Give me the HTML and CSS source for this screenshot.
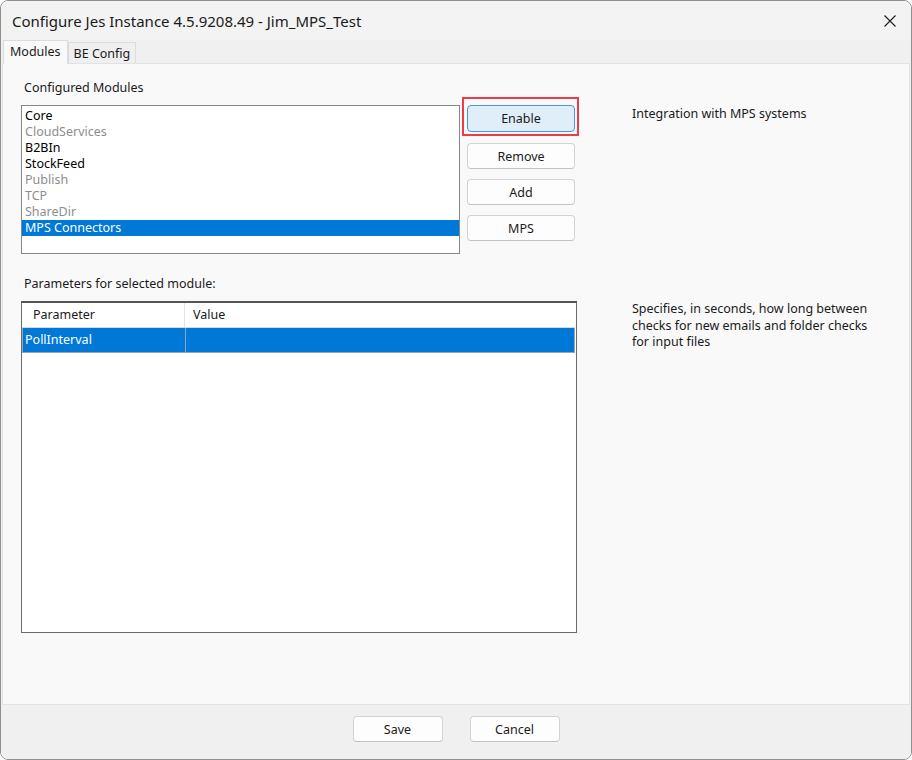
FILE: index.html
```html
<!DOCTYPE html>
<html>
<head>
<meta charset="utf-8">
<title>Configure Jes Instance</title>
<link rel="stylesheet" href="styles.css">
</head>
<body>
<div class="window">
  <div class="titlebar">
    <span class="title">Configure Jes Instance 4.5.9208.49 - Jim_MPS_Test</span>
    <svg class="close" width="12" height="12" viewBox="0 0 12 12"><path d="M0.5 0.5 L11.5 11.5 M11.5 0.5 L0.5 11.5" stroke="#1b1b1b" stroke-width="1.1" fill="none"/></svg>
  </div>
  <div class="tabs">
    <div class="tab active">Modules</div>
    <div class="tab">BE Config</div>
  </div>
  <div class="panel">
    <div class="label">Configured Modules</div>
    <div class="row">
      <div class="listbox">
        <div class="item">Core</div>
        <div class="item disabled">CloudServices</div>
        <div class="item">B2BIn</div>
        <div class="item">StockFeed</div>
        <div class="item disabled">Publish</div>
        <div class="item disabled">TCP</div>
        <div class="item disabled">ShareDir</div>
        <div class="item selected">MPS Connectors</div>
      </div>
      <div class="buttons">
        <div class="highlight"><button class="btn btn-focus">Enable</button></div>
        <button class="btn">Remove</button>
        <button class="btn">Add</button>
        <button class="btn">MPS</button>
      </div>
      <div class="desc desc-top">Integration with MPS systems</div>
    </div>
    <div class="label label-params">Parameters for selected module:</div>
    <div class="row">
      <div class="grid">
        <div class="grid-row grid-head">
          <div class="cell c1">Parameter</div>
          <div class="cell c2">Value</div>
        </div>
        <div class="grid-row grid-sel">
          <div class="cell c1">PollInterval</div>
          <div class="cell c2"></div>
        </div>
      </div>
      <div class="desc desc-bottom">Specifies, in seconds, how long between checks for new emails and folder checks for input files</div>
    </div>
  </div>
  <div class="footer">
    <button class="btn btn-foot">Save</button>
    <button class="btn btn-foot">Cancel</button>
  </div>
</div>
</body>
</html>
```

FILE: styles.css
```css
* { box-sizing: border-box; }
html, body { margin: 0; padding: 0; background: #ffffff; }
body {
  font-family: "Noto Sans", "Open Sans", sans-serif;
  font-size: 12.5px;
  color: #1a1a1a;
}
.window {
  width: 912px;
  height: 760px;
  border: 1px solid #8f8f8f;
  border-radius: 8px;
  background: #f3f3f3;
  overflow: hidden;
  display: flex;
  flex-direction: column;
}
.titlebar {
  height: 39px;
  flex: none;
  display: flex;
  align-items: center;
  justify-content: space-between;
  padding: 0 14px 0 11px;
  background: #f3f3f3;
}
.title {
  font-size: 15px;
  color: #1a1a1a;
  padding-top: 1px;
}
.close { display: block; margin-right: 1px; }
.tabs {
  height: 23px;
  flex: none;
  display: flex;
  align-items: flex-end;
  padding-left: 2px;
  background: #f0f0f0;
}
.tab {
  height: 21px;
  padding: 0 5px 0 5px;
  border: 1px solid #dcdcdc;
  border-bottom: none;
  background: #efefef;
  line-height: 21px;
}
.tab.active {
  height: 24px;
  line-height: 22px;
  padding: 0 6px 0 6px;
  background: #f9f9f9;
  margin-bottom: -1px;
  position: relative;
  z-index: 1;
}
.panel {
  flex: none;
  height: 642px;
  margin: 0 1px 0 1px;
  border: 1px solid #e2e2e2;
  background: #f9f9f9;
  padding: 16px 0 0 18px;
}
.label {
  line-height: 16px;
  height: 16px;
  padding-left: 3px;
  margin-bottom: 9px;
}
.label-params { margin-top: 22px; }
.row {
  display: flex;
  align-items: flex-start;
}
.listbox {
  width: 439px;
  height: 149px;
  border: 1px solid #828790;
  background: #ffffff;
  padding-top: 2px;
}
.item {
  height: 16px;
  line-height: 16px;
  padding-left: 3px;
  color: #000000;
}
.item.disabled { color: #8d8d8d; }
.item.selected {
  background: #0078d7;
  color: #ffffff;
}
.buttons {
  width: 108px;
  margin-left: 7px;
  display: flex;
  flex-direction: column;
  gap: 10px;
}
.highlight {
  position: relative;
  margin-bottom: 1px;
}
.highlight::before {
  content: "";
  position: absolute;
  top: -8px;
  left: -5px;
  right: -4px;
  bottom: -4px;
  border: 2px solid #f03a45;
  pointer-events: none;
}
.btn {
  display: block;
  width: 108px;
  height: 26px;
  border: 1px solid #d3d3d3;
  border-bottom-color: #c2c2c2;
  border-radius: 4px;
  background: #fdfdfd;
  font-family: inherit;
  font-size: 12.5px;
  color: #1a1a1a;
  padding: 0;
  text-align: center;
}
.btn-focus {
  background: #e0eef9;
  border: 1px solid #4a96dc;
  height: 27px;
}
.desc {
  width: 260px;
  line-height: 16.5px;
  color: #1a1a1a;
}
.desc-top { margin-left: 57px; padding-top: 1px; }
.desc-bottom { margin-left: 55px; padding-top: 0; width: 250px; }
.grid {
  width: 556px;
  height: 332px;
  border: 1px solid #6a6a6a;
  border-top: 2px solid #555555;
  background: #ffffff;
}
.grid-row {
  display: flex;
  height: 25px;
  width: 553px;
}
.grid-head {
  border-bottom: 1px solid #d9d9d9;
}
.cell {
  line-height: 24px;
  height: 100%;
}
.c1 { width: 163px; border-right: 1px solid #e3e3e3; }
.c2 { flex: 1; }
.grid-head .c1 { padding-left: 11px; }
.grid-head .c2 { padding-left: 8px; }
.grid-sel {
  background: #0078d7;
  color: #ffffff;
  border: 1px solid #9aa4ad;
  border-top: none;
}
.grid-sel .c1 { padding-left: 2px; border-right-color: #8fa9c4; }
.footer {
  flex: 1;
  background: #f0f0f0;
  display: flex;
  justify-content: center;
  align-items: flex-start;
  gap: 27px;
  padding-top: 11px;
}
.btn-foot { width: 90px; }
```
